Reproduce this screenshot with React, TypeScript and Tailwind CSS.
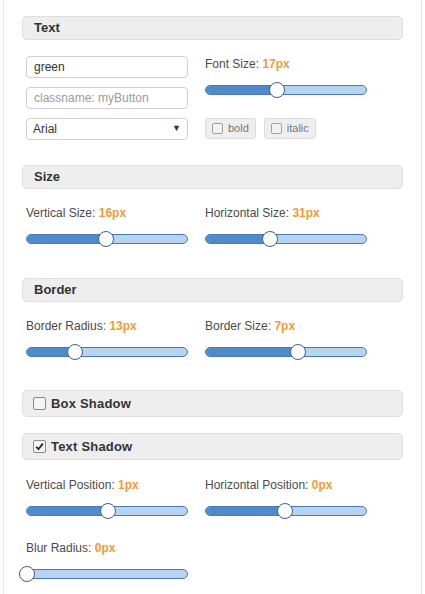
import React from "react";

function Slider({ pct }: { pct: number }) {
  return (
    <div className="relative h-[10px] w-[162px] rounded-full border border-[#4a79b3] bg-[#b6d4f1]">
      <div
        className="absolute left-0 top-0 h-full rounded-l-full bg-[#4f8bca]"
        style={{ width: `${pct}%` }}
      />
      <div
        className="absolute top-1/2 h-[16px] w-[16px] -translate-x-1/2 -translate-y-1/2 rounded-full border border-[#3e5f92] bg-white"
        style={{ left: `${pct}%` }}
      />
    </div>
  );
}

function Field({ label, value, pct }: { label: string; value: string; pct: number }) {
  return (
    <div className="flex flex-col">
      <div className="h-[16px] text-[12px] leading-[16px] text-[#4a4a4a]">
        {label}: <span className="font-bold text-[#f39a33]">{value}</span>
      </div>
      <div className="mt-[13px]">
        <Slider pct={pct} />
      </div>
    </div>
  );
}

function Header({ title }: { title: string }) {
  return (
    <div className="flex h-[24px] items-center rounded-[5px] border border-[#dedede] bg-[#eeeeee] pl-[11px] text-[13px] font-bold text-[#333]">
      {title}
    </div>
  );
}

function CheckHeader({ title, checked }: { title: string; checked: boolean }) {
  return (
    <div className="flex h-[27px] items-center gap-[5px] rounded-[5px] border border-[#dedede] bg-[#eeeeee] pl-[10px] text-[13px] font-bold text-[#333]">
      <span className="flex h-[13px] w-[13px] items-center justify-center rounded-[2px] border border-[#8a8a8a] bg-[#f4f4f4]">
        {checked && (
          <svg width="9" height="9" viewBox="0 0 9 9">
            <path d="M1.2 4.8 L3.5 7.2 L7.8 1.6" stroke="#222" strokeWidth="1.8" fill="none" />
          </svg>
        )}
      </span>
      <span className="tracking-[0.2px]">{title}</span>
    </div>
  );
}

function SmallCheck({ label }: { label: string }) {
  return (
    <div className="flex h-[21px] items-center gap-[5px] rounded-[3px] border border-[#dcdcdc] bg-[#eeeeee] pl-[6px] pr-[6px] text-[11px] text-[#777]">
      <span className="h-[11px] w-[11px] rounded-[2px] border border-[#a0a0a0] bg-[#f2f2f2]" />
      {label}
    </div>
  );
}

export default function App() {
  return (
    <div
      className="min-h-[594px] bg-white px-[3px]"
      style={{ fontFamily: '"Liberation Sans", Arial, sans-serif' }}
    >
      <div className="min-h-[594px] border-x border-[#e4e4e4] px-[18px] pt-[16px]">
        <Header title="Text" />
        <div className="mt-[16px] grid grid-cols-[179px_179px] pl-[4px]">
          <div className="flex flex-col gap-[9px]">
            <div className="flex h-[22px] w-[162px] items-center rounded-[4px] border border-[#cfcfcf] px-[7px] text-[12px] text-[#333]">
              green
            </div>
            <div className="flex h-[22px] w-[162px] items-center rounded-[4px] border border-[#cfcfcf] px-[7px] text-[12px] text-[#9a9a9a]">
              classname: myButton
            </div>
            <div className="flex h-[22px] w-[162px] items-center justify-between rounded-[4px] border border-[#cfcfcf] pl-[6px] pr-[6px] text-[12px] text-[#333]">
              <span>Arial</span>
              <span className="text-[9px] text-[#333]">▼</span>
            </div>
          </div>
          <div className="flex flex-col">
            <Field label="Font Size" value="17px" pct={44.5} />
            <div className="mt-[23px] flex gap-[8px]">
              <SmallCheck label="bold" />
              <SmallCheck label="italic" />
            </div>
          </div>
        </div>

        <div className="mt-[25px]">
          <Header title="Size" />
        </div>
        <div className="mt-[16px] grid grid-cols-[179px_179px] pl-[4px]">
          <Field label="Vertical Size" value="16px" pct={49.5} />
          <Field label="Horizontal Size" value="31px" pct={40} />
        </div>

        <div className="mt-[34px]">
          <Header title="Border" />
        </div>
        <div className="mt-[16px] grid grid-cols-[179px_179px] pl-[4px]">
          <Field label="Border Radius" value="13px" pct={30} />
          <Field label="Border Size" value="7px" pct={57.5} />
        </div>

        <div className="mt-[33px]">
          <CheckHeader title="Box Shadow" checked={false} />
        </div>
        <div className="mt-[16px]">
          <CheckHeader title="Text Shadow" checked={true} />
        </div>
        <div className="mt-[17px] grid grid-cols-[179px_179px] pl-[4px]">
          <Field label="Vertical Position" value="1px" pct={50.5} />
          <Field label="Horizontal Position" value="0px" pct={49.5} />
        </div>
        <div className="mt-[24px] grid grid-cols-[179px_179px] pl-[4px]">
          <Field label="Blur Radius" value="0px" pct={0} />
        </div>
      </div>
    </div>
  );
}
